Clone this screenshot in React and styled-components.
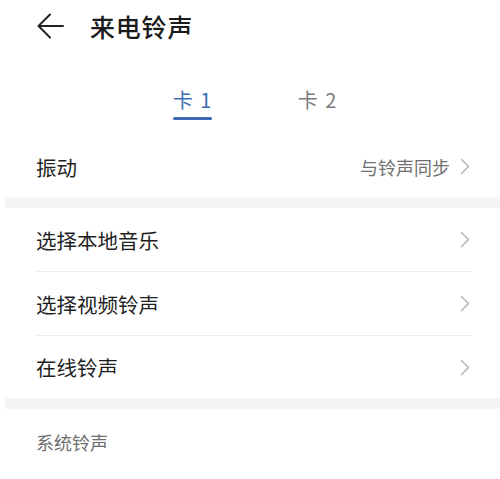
import React from "react";
import styled, { createGlobalStyle } from "styled-components";

const Global = createGlobalStyle`
  html, body { margin: 0; padding: 0; background: #ffffff; }
  body { font-family: "Noto Sans CJK SC", "Noto Sans", sans-serif; }
`;

const Page = styled.div`
  width: 500px;
  height: 479px;
  overflow: hidden;
  background: #ffffff;
  display: flex;
  flex-direction: column;
`;

const Header = styled.header`
  height: 52px;
  display: flex;
  align-items: center;
  padding-left: 37px;
  gap: 26px;
`;

const Title = styled.h1`
  margin: 0;
  font-size: 25px;
  font-weight: 500;
  color: #1b1b1b;
  line-height: 30px;
  letter-spacing: 0.8px;
`;

const Tabs = styled.nav`
  display: flex;
  justify-content: center;
  gap: 87px;
  padding: 36px 0 0 9px;
  height: 84px;
  box-sizing: border-box;
`;

const Tab = styled.div`
  display: flex;
  flex-direction: column;
  align-items: center;
  width: 38px;
`;

const TabLabel = styled.span`
  font-size: 20px;
  line-height: 24px;
  color: ${(p) => (p.$active ? "#3d6cb3" : "#7a7a7a")};
  white-space: pre;
  word-spacing: 3px;
`;

const TabLine = styled.span`
  margin-top: 5px;
  width: 39px;
  height: 2.5px;
  border-radius: 2px;
  background: ${(p) => (p.$active ? "#3d6cb3" : "transparent")};
`;

const Band = styled.div`
  height: 11px;
  margin-left: 5px;
  background: #f5f5f5;
`;

const Row = styled.div`
  display: flex;
  align-items: center;
  height: ${(p) => p.$h || 63}px;
  margin: 0 28px 0 36px;
  padding-right: 2px;
  border-bottom: ${(p) => (p.$divider ? "1px solid #ececec" : "none")};
  box-sizing: content-box;
`;

const RowText = styled.span`
  flex: 1;
  font-size: 20.5px;
  color: #1f1f1f;
  line-height: 28px;
`;

const RowValue = styled.span`
  font-size: 18px;
  color: #707070;
  margin-right: 10px;
  line-height: 24px;
`;

const SectionLabel = styled.div`
  padding: 21px 0 0 36px;
  font-size: 18px;
  line-height: 24px;
  color: #6e6e6e;
`;

const BackArrow = () => (
  <svg width="27" height="26" viewBox="0 0 27 26" fill="none">
    <path d="M26 13H2M13 1.5L1.5 13L13 24.5" stroke="#222" strokeWidth="2" strokeLinecap="round" strokeLinejoin="round" />
  </svg>
);

const Chevron = () => (
  <svg width="10" height="17" viewBox="0 0 10 17" fill="none">
    <path d="M1.5 1.5L8.5 8.5L1.5 15.5" stroke="#b8b8b8" strokeWidth="1.6" strokeLinecap="round" strokeLinejoin="round" />
  </svg>
);

const items = ["选择本地音乐", "选择视频铃声", "在线铃声"];

export default function App() {
  return (
    <Page>
      <Global />
      <Header>
        <BackArrow />
        <Title>来电铃声</Title>
      </Header>
      <Tabs>
        <Tab>
          <TabLabel $active>卡 1</TabLabel>
          <TabLine $active />
        </Tab>
        <Tab>
          <TabLabel>卡 2</TabLabel>
          <TabLine />
        </Tab>
      </Tabs>
      <Row $h={61}>
        <RowText>振动</RowText>
        <RowValue>与铃声同步</RowValue>
        <Chevron />
      </Row>
      <Band />
      {items.map((t, i) => (
        <Row key={t} $divider={i < items.length - 1} $h={i < items.length - 1 ? 63 : 62}>
          <RowText>{t}</RowText>
          <Chevron />
        </Row>
      ))}
      <Band />
      <SectionLabel>系统铃声</SectionLabel>
    </Page>
  );
}
